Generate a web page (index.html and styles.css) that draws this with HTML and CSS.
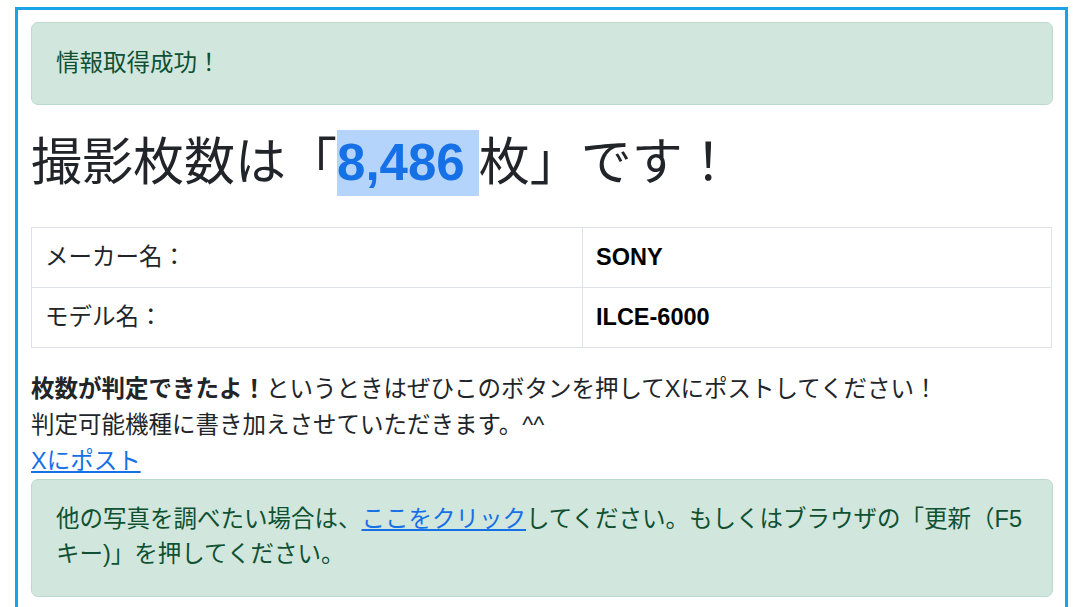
FILE: index.html
```html
<!DOCTYPE html>
<html lang="ja">
<head>
<meta charset="utf-8">
<title>撮影枚数</title>
<link rel="stylesheet" href="styles.css">
</head>
<body>
<div class="frame">
  <div class="alert alert-first">情報取得成功！</div>
  <h1 class="title">撮影枚数は「<span class="count">8,486 </span>枚」です！</h1>
  <table class="info">
    <tr>
      <td class="label">メーカー名：</td>
      <td class="value">SONY</td>
    </tr>
    <tr>
      <td class="label">モデル名：</td>
      <td class="value">ILCE-6000</td>
    </tr>
  </table>
  <p class="note"><strong>枚数が判定できたよ！</strong>というときはぜひこのボタンを押してXにポストしてください！<br>判定可能機種に書き加えさせていただきます。^^<br><a href="#" class="link">Xにポスト</a></p>
  <div class="alert alert-second">他の写真を調べたい場合は、<a href="#" class="link">ここをクリック</a>してください。もしくはブラウザの「更新（F5<br>キー)」を押してください。</div>
</div>
</body>
</html>
```

FILE: styles.css
```css
html, body {
  margin: 0;
  padding: 0;
  background: #ffffff;
}

body {
  font-family: "Liberation Sans", "Noto Sans CJK JP", sans-serif;
  font-size: 23.5px;
  line-height: 36px;
  color: #212529;
}

.frame {
  box-sizing: border-box;
  width: 1053px;
  min-height: 640px;
  margin: 7px 0 0 15px;
  border: 3px solid #1aa3e6;
  padding: 12px 12px 0 13px;
}

.alert {
  box-sizing: border-box;
  background: #d1e7dd;
  border: 1px solid #badbcc;
  border-radius: 7px;
  color: #0f5132;
  padding: 23px 24px;
  line-height: 35px;
}

.alert-first {
  height: 83px;
  padding-top: 23px;
}

.alert-second {
  height: 118px;
  padding-top: 22px;
}

.title {
  margin: 27px 0 33px 0;
  font-size: 51px;
  line-height: 62px;
  font-weight: 400;
  color: #212529;
}

.count {
  color: #1670e6;
  font-weight: 700;
  background: #b4d4fb;
  padding: 4px 0 5px;
}

.info {
  width: 1021px;
  border-collapse: collapse;
  margin: 0 0 23px 0;
}

.info td {
  border: 1px solid #dee2e6;
  padding: 12px 13px 12px 13px;
  line-height: 35px;
  height: 35px;
}

.info .label {
  width: 524px;
}

.info .value {
  font-weight: 700;
  color: #000000;
}

.note {
  margin: 0;
  line-height: 36px;
}

.note strong {
  font-weight: 700;
}

.link {
  color: #1670e6;
  text-decoration: underline;
}
```
